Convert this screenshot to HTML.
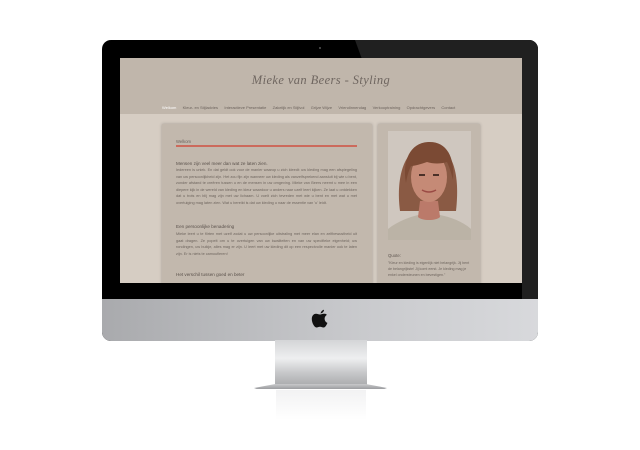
<!DOCTYPE html>
<html><head><meta charset="utf-8"><style>
*{margin:0;padding:0;box-sizing:border-box}
body{width:640px;height:450px;background:#fff;position:relative;overflow:hidden;font-family:"Liberation Sans",sans-serif}
.imac{position:absolute;left:102px;top:40px;width:436px;height:301px;border-radius:9px;overflow:hidden;background:#000}
.refl{position:absolute;left:253px;top:0;width:200px;height:20px;background:#202020;transform:skewX(20deg);transform-origin:top left}
.refl2{position:absolute;left:420px;top:0;width:16px;height:259px;background:#202020}
.chin{position:absolute;left:0;top:259px;width:436px;height:42px;background:linear-gradient(90deg,#a9aaad,#bfc0c3 40%,#c9cacd 60%,#d8d9dc);}
.screen{position:absolute;left:120px;top:58px;width:402px;height:225px;background:#d6cdc3;overflow:hidden}
.head{position:absolute;left:0;top:0;width:402px;height:56px;background:#c0b6ab}
.title{position:absolute;left:0;width:402px;top:15px;text-align:center;font-family:"Liberation Serif",serif;font-style:italic;font-size:12.5px;color:#6f6660;letter-spacing:.4px}
.nav{position:absolute;top:47px;left:42px;font-size:4px;color:#6b625c;white-space:nowrap}
.nav span{margin-right:6.3px}
.nav span.a{color:#fff}
.panel{position:absolute;background:#c2b8ad;box-shadow:0 0 3px rgba(0,0,0,.25)}
.p1{left:42px;top:66px;width:210px;height:170px}
.p2{left:258px;top:66px;width:102px;height:170px}
.t{position:absolute;left:14px;width:181px;font-size:3.8px;line-height:6.5px;color:#6e655e;text-align:justify}
h4{position:absolute;left:14px;font-weight:normal;font-size:4.6px;color:#5a514b}
.stand{position:absolute;left:275px;top:340px;width:92px;height:46px;background:linear-gradient(180deg,#d4d5d7,#eeeff0 40%,#c8c9cb 70%,#a9aaac)}
</style></head><body>
<div class="imac">
 <div class="refl"></div>
 <div class="refl2"></div>
 <div style="position:absolute;left:217px;top:7px;width:2px;height:2px;background:#555;border-radius:1px"></div>
 <div class="chin"></div>
 <svg style="position:absolute;left:209px;top:269px" width="18" height="20" viewBox="0 0 18 20"><path d="M9.5 4.5C10 2.5 11.5 1 13 .8 13 2.6 11.5 4.3 9.5 4.5Z" fill="#111"/><path d="M9 5.5C7.5 5.5 6.5 4.8 5 4.8 2.5 4.8 .8 7 .8 10c0 4 2.7 8.5 4.6 8.5 1.4 0 2-.8 3.6-.8s2 .8 3.6.8c1.6 0 3-2.4 3.8-4.6-1.8-.8-2.8-2.4-2.8-4.2 0-1.6 .9-3 2.2-3.8C15 4.5 13.5 4.8 12.5 4.8 11.2 4.8 10.3 5.5 9 5.5Z" fill="#111"/></svg>
</div>
<div class="stand"></div>
<div style="position:absolute;left:254px;top:384px;width:133px;height:5px;background:linear-gradient(180deg,#c8c9cb,#9c9da0);clip-path:polygon(16% 0,84% 0,100% 80%,98% 100%,2% 100%,0 80%)"></div>
<div style="position:absolute;left:276px;top:390px;width:90px;height:30px;background:linear-gradient(180deg,#f2f2f3,#fff)"></div>
<div class="screen">
 <div class="head">
  <div class="title">Mieke van Beers - Styling</div>
  <div class="nav"><span class="a">Welkom</span><span>Kleur- en Stijladvies</span><span>Interactieve Presentatie</span><span>Zakelijk en Stijlvol</span><span>Grijze Wijze</span><span>Vriendinnendag</span><span>Verkooptraining</span><span>Opdrachtgevers</span><span>Contact</span></div>
 </div>
 <div class="panel p1">
  <div style="position:absolute;left:14px;top:15px;font-size:4.2px;color:#6b625c">Welkom</div>
  <div style="position:absolute;left:14px;top:21px;width:181px;height:2px;background:#cc6a5c"></div>
  <h4 style="top:37px">Mensen zijn veel meer dan wat ze laten zien.</h4>
  <div class="t" style="top:43px">Iedereen is uniek. En dat geldt ook voor de manier waarop u zich kleedt: uw kleding mag een afspiegeling van uw persoonlijkheid zijn. Het zou fijn zijn wanneer uw kleding als vanzelfsprekend aansluit bij wie u bent, zonder afstand te creëren tussen u en de mensen in uw omgeving. Mieke van Beers neemt u mee in een diepere kijk in de wereld van kleding en kleur waardoor u anders naar uzelf leert kijken. Ze laat u ontdekken dat u trots en blij mag zijn met uw lichaam. U voelt zich tevreden met wie u bent en met wat u met overtuiging mag laten zien. Wat u bereikt is dat uw kleding u naar de essentie van 'u' leidt.</div>
  <h4 style="top:100px">Een persoonlijke benadering</h4>
  <div class="t" style="top:107px">Mieke leert u te flirten met uzelf zodat u uw persoonlijke uitstraling met meer elan en zelfbewustheid uit gaat dragen. Ze popelt om u te overtuigen van uw kwaliteiten en van uw specifieke eigenheid; uw rondingen, uw buikje, alles mag er zijn. U leert met uw kleding dit op een respectvolle manier ook te laten zijn. Er is niets te camoufleren!</div>
  <h4 style="top:148px">Het verschil tussen goed en beter</h4>
 </div>
 <div class="panel p2">
  <svg style="position:absolute;left:10px;top:7px" width="83" height="109" viewBox="0 0 83 109">
   <rect width="83" height="109" fill="#cfc7bf"/>
   <path d="M12 80C8 50 14 16 40 14c26 0 32 30 28 66Z" fill="#8a5a44"/>
   <path d="M0 109V98c10-8 22-12 30-14h22c10 2 22 6 31 14v11Z" fill="#bbb3a6"/>
   <path d="M32 70h18l2 16c-4 4-18 4-22 0Z" fill="#bb7a6a"/>
   <ellipse cx="41" cy="46" rx="18" ry="25" fill="#c58a76"/>
   <path d="M18 52C14 30 22 12 40 11c18-1 27 14 25 38-2-8-4-14-6-18-6 2-14 2-20 0-6 2-12 4-16 4-2 4-4 10-5 17Z" fill="#7b4a34"/>
   <path d="M31 44h6M45 44h6" stroke="#4a3028" stroke-width="2"/>
   <path d="M34 59q7 4 14 0" stroke="#9a4a44" stroke-width="1.5" fill="none"/>
  </svg>
  <div style="position:absolute;left:10px;top:129px;font-size:4.3px;color:#5f5650">Quote:</div>
  <div style="position:absolute;left:10px;top:136px;width:84px;font-size:3.6px;line-height:6px;color:#6e655e">"Kleur en kleding is eigenlijk niet belangrijk. Jij bent de belangrijkste! Jij komt eerst. Je kleding mag je enkel ondersteunen en bevestigen."</div>
 </div>
</div>
</body></html>
